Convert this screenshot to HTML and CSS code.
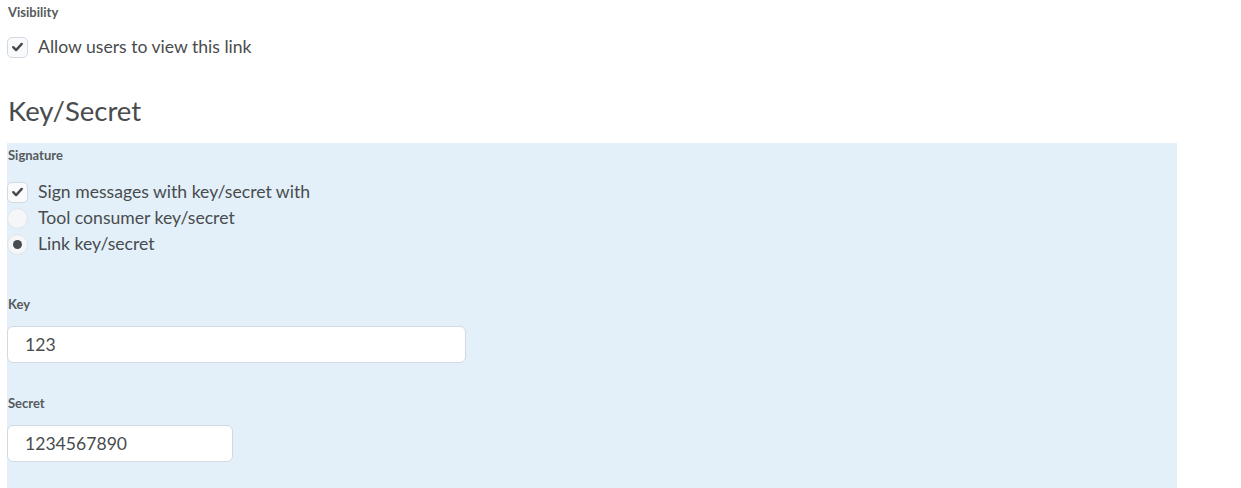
FILE: index.html
```html
<!DOCTYPE html>
<html>
<head>
<meta charset="utf-8">
<link rel="stylesheet" href="styles.css">
</head>
<body>
<div class="page">
  <div class="field-label first">Visibility</div>
  <label class="choice">
    <span class="box checked"><svg viewBox="0 0 20 20" width="20" height="20"><path d="M5.5 10.2l3 3 6-6.4" fill="none" stroke="#494c4e" stroke-width="2.6" stroke-linecap="round" stroke-linejoin="round"/></svg></span>
    <span class="choice-text">Allow users to view this link</span>
  </label>

  <h2 class="heading">Key/Secret</h2>

  <div class="panel">
    <div class="field-label">Signature</div>
    <div class="choices">
      <label class="choice">
        <span class="box checked"><svg viewBox="0 0 20 20" width="20" height="20"><path d="M5.5 10.2l3 3 6-6.4" fill="none" stroke="#494c4e" stroke-width="2.6" stroke-linecap="round" stroke-linejoin="round"/></svg></span>
        <span class="choice-text">Sign messages with key/secret with</span>
      </label>
      <label class="choice">
        <span class="radio"></span>
        <span class="choice-text">Tool consumer key/secret</span>
      </label>
      <label class="choice">
        <span class="radio selected"><span class="dot"></span></span>
        <span class="choice-text">Link key/secret</span>
      </label>
    </div>

    <div class="field-label key-label">Key</div>
    <div class="input wide">123</div>

    <div class="field-label secret-label">Secret</div>
    <div class="input narrow">1234567890</div>
  </div>
</div>
</body>
</html>
```
FILE: styles.css
```css
* { box-sizing: border-box; }
html, body { margin: 0; padding: 0; background: #fff; }
body {
  font-family: Lato, "Open Sans", sans-serif;
  color: #494c4e;
}
.page {
  padding-left: 7px;
  width: 1177px;
}
.field-label {
  font-size: 13px;
  font-weight: 700;
  line-height: 16px;
  color: #565a5c;
}
.first { padding-top: 4px; padding-left: 1px; }
.choice {
  display: flex;
  align-items: center;
  height: 26px;
  gap: 10px;
}
.page > .choice { margin-top: 14px; }
.box {
  width: 21px;
  height: 21px;
  border: 1px solid #d3d9e3;
  border-radius: 5px;
  background: #f9fafb;
  display: flex;
  align-items: center;
  justify-content: center;
  flex: none;
}
.radio {
  width: 21px;
  height: 21px;
  border: 1px solid #dfe4ea;
  border-radius: 50%;
  background: #f4f6f8;
  flex: none;
  display: flex;
  align-items: center;
  justify-content: center;
}
.dot {
  width: 9px;
  height: 9px;
  border-radius: 50%;
  background: #494c4e;
}
.choice-text {
  font-size: 17.6px;
  line-height: 20px;
}
.heading {
  margin: 33px 0 0 1px;
  font-size: 27.5px;
  font-weight: 400;
  line-height: 36px;
  color: #494c4e;
}
.panel {
  margin-top: 14px;
  background: #e3f0f9;
  height: 345px;
  padding-top: 4px;
}
.panel .field-label { padding-left: 1px; }
.choices { margin-top: 16px; }
.key-label { margin-top: 39px; }
.input {
  margin-top: 14px;
  height: 37px;
  background: #fff;
  border: 1px solid #d3d9e3;
  border-radius: 6px;
  font-size: 17.6px;
  line-height: 35px;
  padding-left: 17px;
}
.wide { width: 459px; }
.narrow { width: 226px; }
.secret-label { margin-top: 32px; }
```
